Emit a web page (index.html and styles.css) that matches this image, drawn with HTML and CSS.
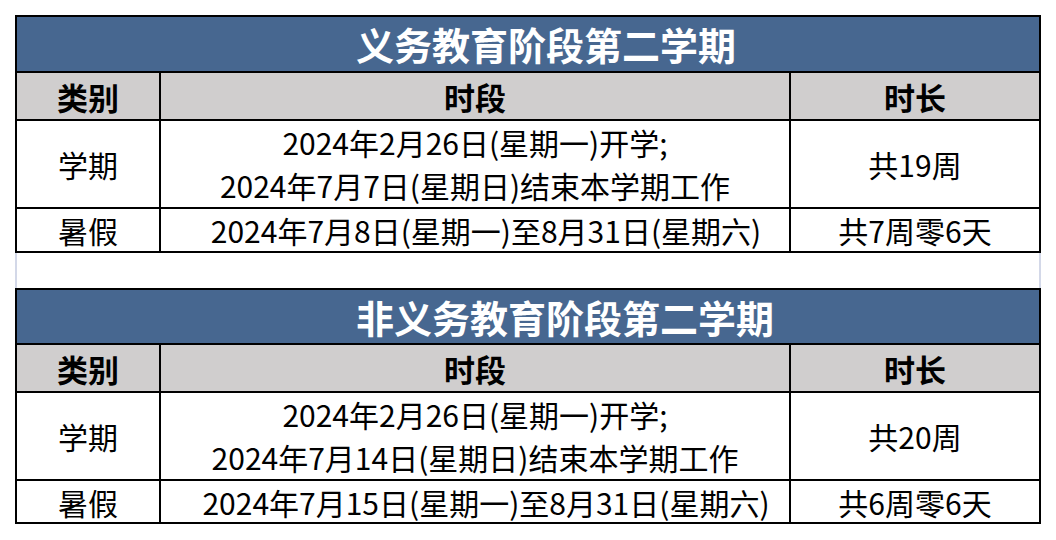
FILE: index.html
```html
<!DOCTYPE html>
<html lang="zh-CN">
<head>
<meta charset="utf-8">
<title>学期安排</title>
<link rel="stylesheet" href="styles.css">
</head>
<body>
<div class="page">
  <div class="sheet">
    <div class="title">义务教育阶段第二学期</div>
    <div class="head">类别</div>
    <div class="head">时段</div>
    <div class="head">时长</div>
    <div class="cell tall">学期</div>
    <div class="cell tall lines"><span>2024年2月26日(星期一)开学;</span><span>2024年7月7日(星期日)结束本学期工作</span></div>
    <div class="cell tall">共19周</div>
    <div class="cell">暑假</div>
    <div class="cell shifted">2024年7月8日(星期一)至8月31日(星期六)</div>
    <div class="cell">共7周零6天</div>
  </div>
  <div class="spacer"></div>
  <div class="sheet sheet-b">
    <div class="title">非义务教育阶段第二学期</div>
    <div class="head">类别</div>
    <div class="head">时段</div>
    <div class="head">时长</div>
    <div class="cell tall">学期</div>
    <div class="cell tall lines"><span>2024年2月26日(星期一)开学;</span><span>2024年7月14日(星期日)结束本学期工作</span></div>
    <div class="cell tall">共20周</div>
    <div class="cell">暑假</div>
    <div class="cell shifted">2024年7月15日(星期一)至8月31日(星期六)</div>
    <div class="cell">共6周零6天</div>
  </div>
</div>
</body>
</html>
```
FILE: styles.css
```css
* { box-sizing: border-box; }
html, body { margin: 0; padding: 0; background: #ffffff; }
body {
  font-family: "Noto Sans CJK SC", "Noto Sans", sans-serif;
  color: #000000;
}
.page {
  padding: 15px 0 0 15px;
  width: 1056px;
}
.sheet {
  width: 1026px;
  display: grid;
  grid-template-columns: 142px 628px 248px;
  grid-template-rows: 54px 46px 86px 42px;
  gap: 2px;
  padding: 2px;
  background: #000000;
}
.sheet-b {
  grid-template-rows: 53px 46px 86px 41px;
}
.title {
  grid-column: 1 / 4;
  background: #476790;
  color: #ffffff;
  font-weight: 700;
  font-size: 38px;
  line-height: 1;
  display: flex;
  align-items: center;
  padding-left: 339px;
}
.head {
  background: #d0cece;
  font-weight: 700;
  font-size: 31px;
  line-height: 1;
  display: flex;
  align-items: center;
  justify-content: center;
}
.cell {
  background: #ffffff;
  font-size: 30px;
  line-height: 1;
  display: flex;
  align-items: center;
  justify-content: center;
  white-space: nowrap;
}
.lines {
  flex-direction: column;
  line-height: 43px;
}
.shifted {
  padding-left: 22px;
}
.spacer {
  width: 1026px;
  height: 35px;
  border-left: 2px solid #d3d8e8;
  border-right: 2px solid #d3d8e8;
}
```
